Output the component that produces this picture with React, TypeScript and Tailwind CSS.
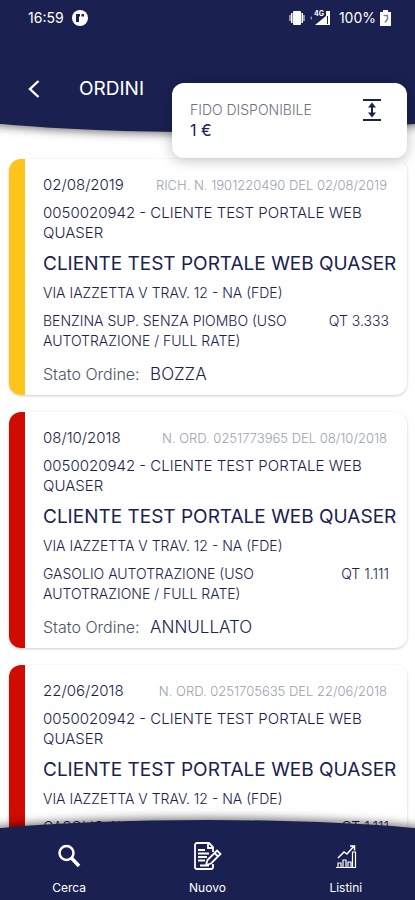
import type { ReactNode } from "react";

type Order = {
  date: string;
  ref: string;
  product: string;
  qty: string;
  status: string;
  color: string;
};

const orders: Order[] = [
  {
    date: "02/08/2019",
    ref: "RICH. N. 1901220490 DEL 02/08/2019",
    product: "BENZINA SUP. SENZA PIOMBO (USO AUTOTRAZIONE / FULL RATE)",
    qty: "3.333",
    status: "BOZZA",
    color: "bg-[#fdc41a]",
  },
  {
    date: "08/10/2018",
    ref: "N. ORD. 0251773965 DEL 08/10/2018",
    product: "GASOLIO AUTOTRAZIONE (USO AUTOTRAZIONE / FULL RATE)",
    qty: "1.111",
    status: "ANNULLATO",
    color: "bg-[#d00b00]",
  },
  {
    date: "22/06/2018",
    ref: "N. ORD. 0251705635 DEL 22/06/2018",
    product: "GASOLIO AUTOTRAZIONE (USO AUTOTRAZIONE / FULL RATE)",
    qty: "1.111",
    status: "ANNULLATO",
    color: "bg-[#d00b00]",
  },
];

function StatusBar() {
  return (
    <div className="flex h-9 items-center justify-between pr-6 pl-7 text-sm">
      <div className="flex items-center gap-2">
        <span>16:59</span>
        <svg viewBox="0 0 16 16" className="size-4">
          <circle cx="8" cy="8" r="8" fill="#fff" />
          <path d="M4 4h4v2.500H7V12H4zM9.500 4h2.500v2.500H9.500z" fill="#1a2150" />
        </svg>
      </div>
      <div className="flex items-center gap-1">
        <svg viewBox="0 0 16 14" className="h-3.5 w-4" fill="#fff">
          <rect x="4" y="0" width="8" height="14" rx="1" />
          <path d="M2 2h1.500v10H2zM.5 4h1v6h-1zM12.500 2H14v10h-1.500zM14.500 4h1v6h-1z" />
        </svg>
        <svg viewBox="0 0 22 16" className="h-4 w-[22px]" fill="#fff">
          <path d="M21 1v14H6l11-9V1z" />
          <path d="M3 6 1 8l2 2z" opacity=".5" />
          <path d="M18.500 6v8" stroke="#1a2150" />
          <text x="5" y="6" fontSize="7" fontWeight="700">4G</text>
        </svg>
        <span className="ml-1">100%</span>
        <svg viewBox="0 0 11 16" className="h-4 w-[11px]">
          <path d="M3 0h5v2h3v14H0V2h3z" fill="#fff" />
          <path d="M3.500 5.500h4v3.500L5 12.500" fill="none" stroke="#7880a4" strokeWidth="1.500" />
        </svg>
      </div>
    </div>
  );
}

function Header() {
  return (
    <header className="relative z-10 h-[132px] shrink-0 text-white">
      <div className="absolute inset-0 -bottom-6 overflow-hidden">
        <div className="absolute -inset-x-[20%] top-0 bottom-6 rounded-b-[50%_27px] bg-[#1a2150] shadow-[0_2px_10px_rgba(0,0,0,0.55)]" />
      </div>
      <div className="relative">
        <StatusBar />
        <div className="flex h-[106px] items-center gap-[35px] pl-6">
          <button type="button" aria-label="Indietro" className="flex size-5 items-center justify-center">
            <svg viewBox="0 0 12 20" className="h-5 w-3" fill="none" stroke="#fff" strokeWidth="2.400">
              <path d="M10.500 2 2 10l8.500 8" />
            </svg>
          </button>
          <h1 className="text-[19px]">ORDINI</h1>
        </div>
      </div>
      <section className="absolute top-[83px] right-2 flex h-[75px] w-[235px] justify-between rounded-xl bg-white px-[18px] py-4 shadow-[0_2px_14px_rgba(0,0,0,0.25)]">
        <div className="text-[#1a2150]">
          <h2 className="text-sm leading-[22px] font-light text-gray-500">FIDO DISPONIBILE</h2>
          <p className="text-base leading-[18px]">1 €</p>
        </div>
        <button type="button" aria-label="Espandi" className="mr-2 h-[22px] w-[18px]">
          <svg viewBox="0 0 18 22" fill="none" stroke="#1a2150" strokeWidth="2">
            <path d="M0 1h18M0 21h18M9 5v12" />
            <path d="M5 8.500 9 3.500l4 5zM5 13.500l4 5 4-5z" fill="#1a2150" stroke="none" />
          </svg>
        </button>
      </section>
    </header>
  );
}

function OrderCard({ order }: { order: Order }) {
  return (
    <li className="flex h-[236px] shrink-0 overflow-hidden rounded-xl bg-white shadow-[0_1px_3px_rgba(0,0,0,0.2)]">
      <div className={`w-4 shrink-0 ${order.color}`} />
      <div className="min-w-0 flex-1 pt-4 pl-[18px] text-sm leading-5 font-light text-[#1a2150]">
        <div className="flex justify-between pr-5 text-[15px]">
          <span>{order.date}</span>
          <span className="text-[13px] text-gray-400">{order.ref}</span>
        </div>
        <p className="mt-2 pr-6 text-[15px]">0050020942 - CLIENTE TEST PORTALE WEB QUASER</p>
        <h2 className="mt-2 text-[19px] leading-[26px] font-normal whitespace-nowrap">CLIENTE TEST PORTALE WEB QUASER</h2>
        <p className="mt-1.5">VIA IAZZETTA V TRAV. 12 - NA (FDE)</p>
        <div className="mt-2 flex justify-between pr-[18px]">
          <p className="w-[260px]">{order.product}</p>
          <span className="shrink-0">QT {order.qty}</span>
        </div>
        <p className="mt-3 text-base leading-[22px] text-gray-600">
          Stato Ordine: <span className="ml-1.5 text-[17px] text-[#1a2150]">{order.status}</span>
        </p>
      </div>
    </li>
  );
}

function NavItem({ label, children }: { label: string; children: ReactNode }) {
  return (
    <button type="button" className="flex flex-1 flex-col items-center gap-2 text-xs">
      <span className="flex h-8 items-center">{children}</span>
      {label}
    </button>
  );
}

function BottomNav() {
  return (
    <nav className="relative z-10 -mt-2 h-20 shrink-0 text-white">
      <div className="absolute inset-0 -top-6 overflow-hidden">
        <div className="absolute -inset-x-[20%] top-6 bottom-0 rounded-t-[50%_27px] bg-[#1a2150] shadow-[0_-2px_10px_rgba(0,0,0,0.55)]" />
      </div>
      <div className="relative flex pt-5">
        <NavItem label="Cerca">
          <svg viewBox="0 0 24 24" className="size-6" fill="none" stroke="#fff">
            <circle cx="9.500" cy="9" r="7" strokeWidth="2.500" />
            <path d="m14.500 14 7.500 8" strokeWidth="3.500" />
          </svg>
        </NavItem>
        <NavItem label="Nuovo">
          <svg viewBox="0 0 30 30" className="size-[30px]" fill="none" stroke="#fff" strokeWidth="1.800">
            <path d="M21 11V6l-4-4H5a2 2 0 0 0-2 2v22a2 2 0 0 0 2 2h14a2 2 0 0 0 2-2v-3" />
            <path d="M16 2v5h5M6 9h7M6 12.500h11M6 16h9M6 19.500h7" />
            <path d="m14 24 1.500-5L25 9.500l3.500 3.500-9.500 9.500zM22.500 12l3.500 3.500M8 24.500h9" />
          </svg>
        </NavItem>
        <NavItem label="Listini">
          <svg viewBox="0 0 24 26" className="h-[26px] w-6" fill="none" stroke="#fff" strokeWidth="1.200">
            <path d="M2 24.500h20M4 24v-4h3v4M9 24v-7h3v7M14 24v-5h3v5M18.500 24V9h3v15" />
            <path d="m4 15 6-6 3 2 7-8M16 3h4.500v4.500" strokeWidth="1.500" />
          </svg>
        </NavItem>
      </div>
    </nav>
  );
}

export default function App() {
  return (
    <div className="flex h-screen flex-col overflow-hidden bg-white font-['Inter','Liberation_Sans',sans-serif]">
      <Header />
      <main className="-mb-2 min-h-0 flex-1 overflow-y-auto pt-[27px] [scrollbar-width:none]">
        <ul className="flex flex-col gap-[17px] pr-2 pl-[9px]">
          {orders.map((order) => (
            <OrderCard key={order.date} order={order} />
          ))}
        </ul>
      </main>
      <BottomNav />
    </div>
  );
}
